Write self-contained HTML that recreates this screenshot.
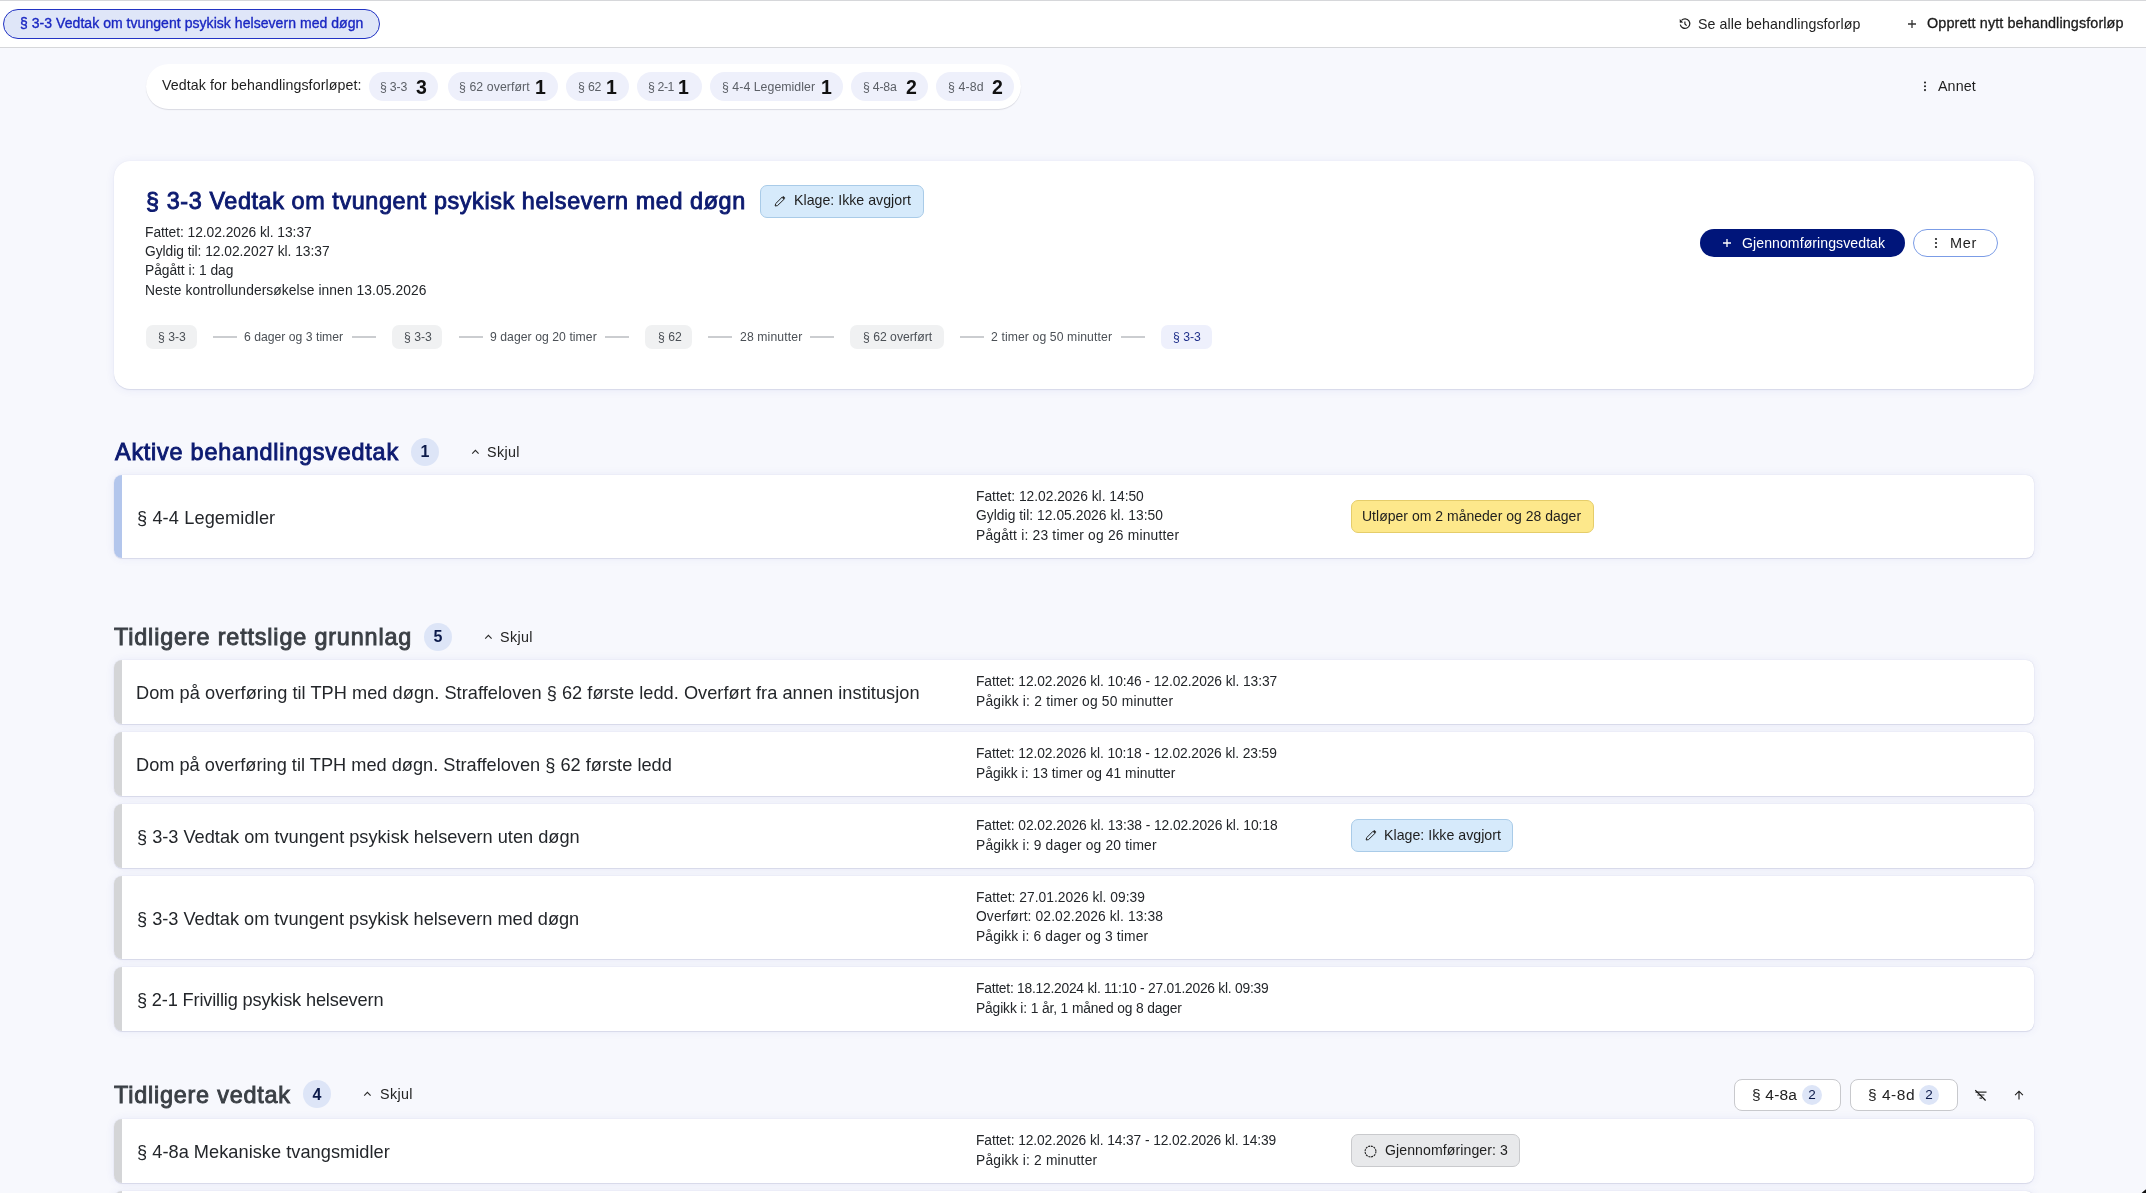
<!DOCTYPE html>
<html><head><meta charset="utf-8"><title>Behandlingsforløp</title>
<style>
html,body{margin:0;padding:0;}
body{width:2146px;height:1193px;overflow:hidden;background:#f7f8fd;font-family:"Liberation Sans", sans-serif;position:relative;}
.t{position:absolute;white-space:nowrap;will-change:transform;}
.b{position:absolute;}
</style></head><body>
<div class="b" style="left:0px;top:0px;width:2146px;height:48px;background:#fff;border-top:1px solid #d6d7da;border-bottom:1px solid #d6d7da;box-sizing:border-box"></div>
<div class="b" style="left:3px;top:9px;width:377px;height:30px;background:#dfe6f8;border:1px solid #2233c4;border-radius:15px;box-sizing:border-box"></div>
<div class="t" style="left:19.88px;top:14.35px;font-size:14px;line-height:18px;color:#1a27c2;font-weight:400;letter-spacing:0.049px;-webkit-text-stroke:0.35px #1a27c2">§ 3-3 Vedtak om tvungent psykisk helsevern med døgn</div>
<svg class="b" style="left:1672px;top:12px" width="28" height="24" viewBox="0 0 28 24"><path d="M8.3 12.6 A4.8 4.8 0 1 0 9.5 8.3" fill="none" stroke="#1e1e1e" stroke-width="1.2"/><path d="M7.7 7.0 L7.8 10.7 L11.2 10.5 Z" fill="#1e1e1e"/><path d="M12.9 9.4 V11.9 L14.6 13.6" fill="none" stroke="#1e1e1e" stroke-width="1.15"/></svg>
<div class="t" style="left:1697.90px;top:15.08px;font-size:14.2px;line-height:18px;color:#222;font-weight:400;letter-spacing:0.092px">Se alle behandlingsforløp</div>
<svg class="b" style="left:1907px;top:19px" width="10" height="10" viewBox="0 0 10 10"><path d="M5 1 V9 M1 5 H9" stroke="#333" stroke-width="1.3"/></svg>
<div class="t" style="left:1927.45px;top:13.51px;font-size:14.4px;line-height:19px;color:#1b1b1b;font-weight:400;letter-spacing:0.100px;-webkit-text-stroke:0.3px #1b1b1b">Opprett nytt behandlingsforløp</div>
<div class="b" style="left:146px;top:64px;width:875px;height:45px;background:#fff;border-radius:23px;box-shadow:0 1px 1px rgba(0,0,30,0.12)"></div>
<div class="t" style="left:161.60px;top:76.08px;font-size:14.2px;line-height:18px;color:#1e1e1e;font-weight:400;letter-spacing:0.103px">Vedtak for behandlingsforløpet:</div>
<div class="b" style="left:369px;top:72px;width:69px;height:29px;background:#eef0fb;border-radius:15px"></div>
<div class="t" style="left:380.30px;top:78.74px;font-size:12.3px;line-height:16px;color:#5b5f66;font-weight:400;letter-spacing:-0.200px">§ 3-3</div>
<div class="t" style="left:416.40px;top:74.74px;font-size:19.5px;line-height:25px;color:#111;font-weight:700;">3</div>
<div class="b" style="left:448px;top:72px;width:110px;height:29px;background:#eef0fb;border-radius:15px"></div>
<div class="t" style="left:458.70px;top:78.74px;font-size:12.3px;line-height:16px;color:#5b5f66;font-weight:400;letter-spacing:0.083px">§ 62 overført</div>
<div class="t" style="left:535.10px;top:74.74px;font-size:19.5px;line-height:25px;color:#111;font-weight:700;">1</div>
<div class="b" style="left:566px;top:72px;width:63px;height:29px;background:#eef0fb;border-radius:15px"></div>
<div class="t" style="left:577.50px;top:78.74px;font-size:12.3px;line-height:16px;color:#5b5f66;font-weight:400;letter-spacing:-0.167px">§ 62</div>
<div class="t" style="left:605.80px;top:74.74px;font-size:19.5px;line-height:25px;color:#111;font-weight:700;">1</div>
<div class="b" style="left:637px;top:72px;width:65px;height:29px;background:#eef0fb;border-radius:15px"></div>
<div class="t" style="left:648.10px;top:78.74px;font-size:12.3px;line-height:16px;color:#5b5f66;font-weight:400;letter-spacing:-0.400px">§ 2-1</div>
<div class="t" style="left:678.40px;top:74.74px;font-size:19.5px;line-height:25px;color:#111;font-weight:700;">1</div>
<div class="b" style="left:710px;top:72px;width:133px;height:29px;background:#eef0fb;border-radius:15px"></div>
<div class="t" style="left:721.60px;top:78.74px;font-size:12.3px;line-height:16px;color:#5b5f66;font-weight:400;letter-spacing:0.047px">§ 4-4 Legemidler</div>
<div class="t" style="left:820.50px;top:74.74px;font-size:19.5px;line-height:25px;color:#111;font-weight:700;">1</div>
<div class="b" style="left:851px;top:72px;width:77px;height:29px;background:#eef0fb;border-radius:15px"></div>
<div class="t" style="left:862.60px;top:78.74px;font-size:12.3px;line-height:16px;color:#5b5f66;font-weight:400;letter-spacing:-0.220px">§ 4-8a</div>
<div class="t" style="left:906.00px;top:74.74px;font-size:19.5px;line-height:25px;color:#111;font-weight:700;">2</div>
<div class="b" style="left:936px;top:72px;width:78px;height:29px;background:#eef0fb;border-radius:15px"></div>
<div class="t" style="left:948.10px;top:78.74px;font-size:12.3px;line-height:16px;color:#5b5f66;font-weight:400;letter-spacing:0.120px">§ 4-8d</div>
<div class="t" style="left:991.70px;top:74.74px;font-size:19.5px;line-height:25px;color:#111;font-weight:700;">2</div>
<svg class="b" style="left:1923px;top:80px" width="4" height="13" viewBox="0 0 4 13"><circle cx="2" cy="2.5" r="1.05" fill="#222"/><circle cx="2" cy="6.3" r="1.05" fill="#222"/><circle cx="2" cy="10.1" r="1.05" fill="#222"/></svg>
<div class="t" style="left:1938.40px;top:77.05px;font-size:14.3px;line-height:19px;color:#1e1e1e;font-weight:400;letter-spacing:0.075px">Annet</div>
<div class="b" style="left:114px;top:161px;width:1920px;height:228px;background:#fff;border-radius:16px;box-shadow:0 1px 1px rgba(30,40,110,0.10),0 0 1px rgba(40,60,140,0.08),0 1px 10px rgba(50,70,180,0.08)"></div>
<div class="t" style="left:145.65px;top:185.89px;font-size:23.4px;line-height:30px;color:#0c1a70;font-weight:400;letter-spacing:0.594px;-webkit-text-stroke:0.9px #0c1a70">§ 3-3 Vedtak om tvungent psykisk helsevern med døgn</div>
<div class="b" style="left:760px;top:185px;width:164px;height:33px;background:#d6eafb;border:1px solid #a9cbe8;border-radius:7px;box-sizing:border-box"></div>
<svg class="b" style="left:774px;top:195px" width="12" height="12" viewBox="0 0 12 12"><path d="M1.2 11 L1.6 8.7 L8 2.3 L10 4.3 L3.5 10.6 Z" fill="none" stroke="#222" stroke-width="1" stroke-linejoin="round"/><path d="M8 2.3 L9.3 1 L11.3 3 L10 4.3 Z" fill="#222"/></svg>
<div class="t" style="left:794.10px;top:191.08px;font-size:14.2px;line-height:18px;color:#1e1e1e;font-weight:400;letter-spacing:0.006px">Klage: Ikke avgjort</div>
<div class="t" style="left:145.00px;top:223.82px;font-size:13.8px;line-height:18px;color:#23262a;font-weight:400;letter-spacing:-0.048px">Fattet: 12.02.2026 kl. 13:37</div>
<div class="t" style="left:145.40px;top:243.12px;font-size:13.8px;line-height:18px;color:#23262a;font-weight:400;letter-spacing:-0.032px">Gyldig til: 12.02.2027 kl. 13:37</div>
<div class="t" style="left:145.00px;top:262.42px;font-size:13.8px;line-height:18px;color:#23262a;font-weight:400;letter-spacing:-0.043px">Pågått i: 1 dag</div>
<div class="t" style="left:145.00px;top:281.72px;font-size:13.8px;line-height:18px;color:#23262a;font-weight:400;letter-spacing:0.090px">Neste kontrollundersøkelse innen 13.05.2026</div>
<div class="b" style="left:146px;top:325px;width:51px;height:24px;background:#f0f1f2;border-radius:7px"></div>
<div class="t" style="left:158.30px;top:329.27px;font-size:12.2px;line-height:16px;color:#4b5056;font-weight:400;">§ 3-3</div>
<div class="b" style="left:213px;top:336px;width:24px;height:2px;background:#cbcdd0"></div>
<div class="t" style="left:244.20px;top:329.27px;font-size:12.2px;line-height:16px;color:#4b5056;font-weight:400;letter-spacing:0.012px">6 dager og 3 timer</div>
<div class="b" style="left:352px;top:336px;width:24px;height:2px;background:#cbcdd0"></div>
<div class="b" style="left:392px;top:325px;width:50px;height:24px;background:#f0f1f2;border-radius:7px"></div>
<div class="t" style="left:404.30px;top:329.27px;font-size:12.2px;line-height:16px;color:#4b5056;font-weight:400;">§ 3-3</div>
<div class="b" style="left:459px;top:336px;width:24px;height:2px;background:#cbcdd0"></div>
<div class="t" style="left:490.10px;top:329.27px;font-size:12.2px;line-height:16px;color:#4b5056;font-weight:400;letter-spacing:0.056px">9 dager og 20 timer</div>
<div class="b" style="left:605px;top:336px;width:24px;height:2px;background:#cbcdd0"></div>
<div class="b" style="left:645px;top:325px;width:47px;height:24px;background:#f0f1f2;border-radius:7px"></div>
<div class="t" style="left:657.70px;top:329.27px;font-size:12.2px;line-height:16px;color:#4b5056;font-weight:400;">§ 62</div>
<div class="b" style="left:708px;top:336px;width:24px;height:2px;background:#cbcdd0"></div>
<div class="t" style="left:739.80px;top:329.27px;font-size:12.2px;line-height:16px;color:#4b5056;font-weight:400;letter-spacing:0.130px">28 minutter</div>
<div class="b" style="left:810px;top:336px;width:24px;height:2px;background:#cbcdd0"></div>
<div class="b" style="left:850px;top:325px;width:94px;height:24px;background:#f0f1f2;border-radius:7px"></div>
<div class="t" style="left:862.60px;top:329.27px;font-size:12.2px;line-height:16px;color:#4b5056;font-weight:400;">§ 62 overført</div>
<div class="b" style="left:960px;top:336px;width:24px;height:2px;background:#cbcdd0"></div>
<div class="t" style="left:991.40px;top:329.27px;font-size:12.2px;line-height:16px;color:#4b5056;font-weight:400;letter-spacing:0.114px">2 timer og 50 minutter</div>
<div class="b" style="left:1121px;top:336px;width:24px;height:2px;background:#cbcdd0"></div>
<div class="b" style="left:1161px;top:325px;width:51px;height:24px;background:#eef0fc;border-radius:7px"></div>
<div class="t" style="left:1173.30px;top:329.27px;font-size:12.2px;line-height:16px;color:#1f2f8a;font-weight:400;">§ 3-3</div>
<div class="b" style="left:1700px;top:229px;width:205px;height:28px;background:#00157a;border-radius:14px"></div>
<svg class="b" style="left:1722px;top:238px" width="10" height="10" viewBox="0 0 10 10"><path d="M5 1 V9 M1 5 H9" stroke="#fff" stroke-width="1.3"/></svg>
<div class="t" style="left:1741.50px;top:233.61px;font-size:14.1px;line-height:18px;color:#fff;font-weight:400;letter-spacing:0.068px">Gjennomføringsvedtak</div>
<div class="b" style="left:1913px;top:229px;width:85px;height:28px;background:#fff;border:1px solid #7b9ce6;border-radius:14px;box-sizing:border-box"></div>
<svg class="b" style="left:1934px;top:237px" width="4" height="12" viewBox="0 0 4 12"><circle cx="2" cy="2" r="1.1" fill="#222"/><circle cx="2" cy="6" r="1.1" fill="#222"/><circle cx="2" cy="10" r="1.1" fill="#222"/></svg>
<div class="t" style="left:1949.50px;top:233.98px;font-size:14.5px;line-height:19px;color:#1e1e1e;font-weight:400;letter-spacing:0.700px">Mer</div>
<div class="t" style="left:114.55px;top:437.39px;font-size:23.4px;line-height:30px;color:#0c1a70;font-weight:400;letter-spacing:0.774px;-webkit-text-stroke:0.9px #0c1a70">Aktive behandlingsvedtak</div>
<div class="b" style="left:411px;top:437.5px;width:28px;height:28px;background:#dde5f7;border-radius:50%"></div>
<div class="t" style="left:415.00px;top:441.46px;font-size:16px;line-height:21px;color:#0c1a4a;font-weight:700;width:20px;text-align:center">1</div>
<svg class="b" style="left:470.5px;top:448.5px" width="9" height="6" viewBox="0 0 9 6"><path d="M1.2 4.6 L4.4 1.3 L7.6 4.6" fill="none" stroke="#2a2a2a" stroke-width="1.1"/></svg>
<div class="t" style="left:486.70px;top:442.55px;font-size:14.3px;line-height:19px;color:#222;font-weight:400;letter-spacing:0.375px">Skjul</div>
<div class="b" style="left:114px;top:475px;width:1920px;height:83px;background:#fff;border-radius:8px;box-shadow:0 1px 1px rgba(30,40,110,0.10),0 0 1px rgba(30,40,110,0.18),0 0 10px rgba(60,80,190,0.08)"></div>
<div class="b" style="left:114px;top:475px;width:8px;height:83px;background:#b3c6ec;border-radius:8px 0 0 8px"></div>
<div class="t" style="left:136.80px;top:505.89px;font-size:18.2px;line-height:24px;color:#23262a;font-weight:400;letter-spacing:0.113px">§ 4-4 Legemidler</div>
<div class="t" style="left:975.90px;top:487.82px;font-size:13.8px;line-height:18px;color:#23262a;font-weight:400;letter-spacing:-0.007px">Fattet: 12.02.2026 kl. 14:50</div>
<div class="t" style="left:976.30px;top:507.32px;font-size:13.8px;line-height:18px;color:#23262a;font-weight:400;letter-spacing:0.042px">Gyldig til: 12.05.2026 kl. 13:50</div>
<div class="t" style="left:975.90px;top:526.82px;font-size:13.8px;line-height:18px;color:#23262a;font-weight:400;letter-spacing:0.209px">Pågått i: 23 timer og 26 minutter</div>
<div class="b" style="left:1351px;top:500px;width:243px;height:33px;background:#fde88b;border:1px solid #e5cd6a;border-radius:7px;box-sizing:border-box"></div>
<div class="t" style="left:1362.20px;top:507.15px;font-size:14px;line-height:18px;color:#1e1e1e;font-weight:400;letter-spacing:0.013px">Utløper om 2 måneder og 28 dager</div>
<div class="t" style="left:114.15px;top:622.39px;font-size:23.4px;line-height:30px;color:#3a3f45;font-weight:400;letter-spacing:0.833px;-webkit-text-stroke:0.9px #3a3f45">Tidligere rettslige grunnlag</div>
<div class="b" style="left:424px;top:622.5px;width:28px;height:28px;background:#dde5f7;border-radius:50%"></div>
<div class="t" style="left:428.00px;top:626.46px;font-size:16px;line-height:21px;color:#0c1a4a;font-weight:700;width:20px;text-align:center">5</div>
<svg class="b" style="left:483.8px;top:633.5px" width="9" height="6" viewBox="0 0 9 6"><path d="M1.2 4.6 L4.4 1.3 L7.6 4.6" fill="none" stroke="#2a2a2a" stroke-width="1.1"/></svg>
<div class="t" style="left:500.00px;top:627.55px;font-size:14.3px;line-height:19px;color:#222;font-weight:400;letter-spacing:0.375px">Skjul</div>
<div class="b" style="left:114px;top:660px;width:1920px;height:64px;background:#fff;border-radius:8px;box-shadow:0 1px 1px rgba(30,40,110,0.10),0 0 1px rgba(30,40,110,0.18),0 0 10px rgba(60,80,190,0.08)"></div>
<div class="b" style="left:114px;top:660px;width:8px;height:64px;background:#d4d5d7;border-radius:8px 0 0 8px"></div>
<div class="t" style="left:136.30px;top:681.39px;font-size:18.2px;line-height:24px;color:#23262a;font-weight:400;letter-spacing:0.040px">Dom på overføring til TPH med døgn. Straffeloven § 62 første ledd. Overført fra annen institusjon</div>
<div class="t" style="left:975.90px;top:673.07px;font-size:13.8px;line-height:18px;color:#23262a;font-weight:400;letter-spacing:-0.082px">Fattet: 12.02.2026 kl. 10:46 - 12.02.2026 kl. 13:37</div>
<div class="t" style="left:975.90px;top:692.57px;font-size:13.8px;line-height:18px;color:#23262a;font-weight:400;letter-spacing:0.223px">Pågikk i: 2 timer og 50 minutter</div>
<div class="b" style="left:114px;top:732px;width:1920px;height:64px;background:#fff;border-radius:8px;box-shadow:0 1px 1px rgba(30,40,110,0.10),0 0 1px rgba(30,40,110,0.18),0 0 10px rgba(60,80,190,0.08)"></div>
<div class="b" style="left:114px;top:732px;width:8px;height:64px;background:#d4d5d7;border-radius:8px 0 0 8px"></div>
<div class="t" style="left:136.30px;top:753.39px;font-size:18.2px;line-height:24px;color:#23262a;font-weight:400;letter-spacing:0.011px">Dom på overføring til TPH med døgn. Straffeloven § 62 første ledd</div>
<div class="t" style="left:975.90px;top:745.07px;font-size:13.8px;line-height:18px;color:#23262a;font-weight:400;letter-spacing:-0.088px">Fattet: 12.02.2026 kl. 10:18 - 12.02.2026 kl. 23:59</div>
<div class="t" style="left:975.90px;top:764.57px;font-size:13.8px;line-height:18px;color:#23262a;font-weight:400;letter-spacing:0.044px">Pågikk i: 13 timer og 41 minutter</div>
<div class="b" style="left:114px;top:804px;width:1920px;height:64px;background:#fff;border-radius:8px;box-shadow:0 1px 1px rgba(30,40,110,0.10),0 0 1px rgba(30,40,110,0.18),0 0 10px rgba(60,80,190,0.08)"></div>
<div class="b" style="left:114px;top:804px;width:8px;height:64px;background:#d4d5d7;border-radius:8px 0 0 8px"></div>
<div class="t" style="left:136.80px;top:825.39px;font-size:18.2px;line-height:24px;color:#23262a;font-weight:400;letter-spacing:-0.004px">§ 3-3 Vedtak om tvungent psykisk helsevern uten døgn</div>
<div class="t" style="left:975.90px;top:817.07px;font-size:13.8px;line-height:18px;color:#23262a;font-weight:400;letter-spacing:-0.074px">Fattet: 02.02.2026 kl. 13:38 - 12.02.2026 kl. 10:18</div>
<div class="t" style="left:975.90px;top:836.57px;font-size:13.8px;line-height:18px;color:#23262a;font-weight:400;letter-spacing:0.175px">Pågikk i: 9 dager og 20 timer</div>
<div class="b" style="left:1351px;top:819px;width:162px;height:33px;background:#d6eafb;border:1px solid #a9cbe8;border-radius:7px;box-sizing:border-box"></div>
<svg class="b" style="left:1365px;top:829px" width="12" height="12" viewBox="0 0 12 12"><path d="M1.2 11 L1.6 8.7 L8 2.3 L10 4.3 L3.5 10.6 Z" fill="none" stroke="#222" stroke-width="1" stroke-linejoin="round"/><path d="M8 2.3 L9.3 1 L11.3 3 L10 4.3 Z" fill="#222"/></svg>
<div class="t" style="left:1384.30px;top:825.58px;font-size:14.2px;line-height:18px;color:#1e1e1e;font-weight:400;letter-spacing:0.011px">Klage: Ikke avgjort</div>
<div class="b" style="left:114px;top:876px;width:1920px;height:83px;background:#fff;border-radius:8px;box-shadow:0 1px 1px rgba(30,40,110,0.10),0 0 1px rgba(30,40,110,0.18),0 0 10px rgba(60,80,190,0.08)"></div>
<div class="b" style="left:114px;top:876px;width:8px;height:83px;background:#d4d5d7;border-radius:8px 0 0 8px"></div>
<div class="t" style="left:136.80px;top:906.89px;font-size:18.2px;line-height:24px;color:#23262a;font-weight:400;letter-spacing:-0.012px">§ 3-3 Vedtak om tvungent psykisk helsevern med døgn</div>
<div class="t" style="left:975.90px;top:888.82px;font-size:13.8px;line-height:18px;color:#23262a;font-weight:400;letter-spacing:0.037px">Fattet: 27.01.2026 kl. 09:39</div>
<div class="t" style="left:976.40px;top:908.32px;font-size:13.8px;line-height:18px;color:#23262a;font-weight:400;letter-spacing:0.128px">Overført: 02.02.2026 kl. 13:38</div>
<div class="t" style="left:975.90px;top:927.82px;font-size:13.8px;line-height:18px;color:#23262a;font-weight:400;letter-spacing:0.152px">Pågikk i: 6 dager og 3 timer</div>
<div class="b" style="left:114px;top:967px;width:1920px;height:64px;background:#fff;border-radius:8px;box-shadow:0 1px 1px rgba(30,40,110,0.10),0 0 1px rgba(30,40,110,0.18),0 0 10px rgba(60,80,190,0.08)"></div>
<div class="b" style="left:114px;top:967px;width:8px;height:64px;background:#d4d5d7;border-radius:8px 0 0 8px"></div>
<div class="t" style="left:136.80px;top:988.39px;font-size:18.2px;line-height:24px;color:#23262a;font-weight:400;letter-spacing:-0.162px">§ 2-1 Frivillig psykisk helsevern</div>
<div class="t" style="left:975.90px;top:980.07px;font-size:13.8px;line-height:18px;color:#23262a;font-weight:400;letter-spacing:-0.232px">Fattet: 18.12.2024 kl. 11:10 - 27.01.2026 kl. 09:39</div>
<div class="t" style="left:975.90px;top:999.57px;font-size:13.8px;line-height:18px;color:#23262a;font-weight:400;letter-spacing:-0.127px">Pågikk i: 1 år, 1 måned og 8 dager</div>
<div class="t" style="left:114.15px;top:1079.89px;font-size:23.4px;line-height:30px;color:#3a3f45;font-weight:400;letter-spacing:0.787px;-webkit-text-stroke:0.9px #3a3f45">Tidligere vedtak</div>
<div class="b" style="left:303px;top:1080px;width:28px;height:28px;background:#dde5f7;border-radius:50%"></div>
<div class="t" style="left:307.00px;top:1083.96px;font-size:16px;line-height:21px;color:#0c1a4a;font-weight:700;width:20px;text-align:center">4</div>
<svg class="b" style="left:362.7px;top:1091px" width="9" height="6" viewBox="0 0 9 6"><path d="M1.2 4.6 L4.4 1.3 L7.6 4.6" fill="none" stroke="#2a2a2a" stroke-width="1.1"/></svg>
<div class="t" style="left:380.00px;top:1085.05px;font-size:14.3px;line-height:19px;color:#222;font-weight:400;letter-spacing:0.375px">Skjul</div>
<div class="b" style="left:1734px;top:1079px;width:107px;height:32px;background:#fff;border:1px solid #c8c9cd;border-radius:8px;box-sizing:border-box"></div>
<div class="t" style="left:1752.40px;top:1084.63px;font-size:15.5px;line-height:20px;color:#222;font-weight:400;letter-spacing:0.200px">§ 4-8a</div>
<div class="b" style="left:1802px;top:1085px;width:20px;height:20px;background:#dde5f7;border-radius:50%"></div>
<div class="t" style="left:1802.00px;top:1086.32px;font-size:13.5px;line-height:18px;color:#0c1a4a;font-weight:400;width:20px;text-align:center">2</div>
<div class="b" style="left:1850px;top:1079px;width:108px;height:32px;background:#fff;border:1px solid #c8c9cd;border-radius:8px;box-sizing:border-box"></div>
<div class="t" style="left:1868.10px;top:1084.63px;font-size:15.5px;line-height:20px;color:#222;font-weight:400;letter-spacing:0.520px">§ 4-8d</div>
<div class="b" style="left:1919px;top:1085px;width:20px;height:20px;background:#dde5f7;border-radius:50%"></div>
<div class="t" style="left:1919.00px;top:1086.32px;font-size:13.5px;line-height:18px;color:#0c1a4a;font-weight:400;width:20px;text-align:center">2</div>
<svg class="b" style="left:1974px;top:1089px" width="14" height="14" viewBox="0 0 14 14"><path d="M1.5 3.1 H12.5 M3.2 6 H10.4 M5.5 9.1 H8" stroke="#333" stroke-width="1.1"/><path d="M1.3 1.2 L11.6 11.5" stroke="#111" stroke-width="1.15"/></svg>
<svg class="b" style="left:2013px;top:1090px" width="12" height="12" viewBox="0 0 12 12"><path d="M6 9.6 V1.6 M2.1 5.1 L6 1.2 L9.9 5.1" fill="none" stroke="#1e1e1e" stroke-width="1.15"/></svg>
<div class="b" style="left:114px;top:1119px;width:1920px;height:64px;background:#fff;border-radius:8px;box-shadow:0 1px 1px rgba(30,40,110,0.10),0 0 1px rgba(30,40,110,0.18),0 0 10px rgba(60,80,190,0.08)"></div>
<div class="b" style="left:114px;top:1119px;width:8px;height:64px;background:#d4d5d7;border-radius:8px 0 0 8px"></div>
<div class="t" style="left:136.80px;top:1140.39px;font-size:18.2px;line-height:24px;color:#23262a;font-weight:400;letter-spacing:0.036px">§ 4-8a Mekaniske tvangsmidler</div>
<div class="t" style="left:975.90px;top:1132.07px;font-size:13.8px;line-height:18px;color:#23262a;font-weight:400;letter-spacing:-0.100px">Fattet: 12.02.2026 kl. 14:37 - 12.02.2026 kl. 14:39</div>
<div class="t" style="left:975.90px;top:1151.57px;font-size:13.8px;line-height:18px;color:#23262a;font-weight:400;letter-spacing:0.200px">Pågikk i: 2 minutter</div>
<div class="b" style="left:1351px;top:1134px;width:169px;height:33px;background:#e8e9eb;border:1px solid #c9cacd;border-radius:7px;box-sizing:border-box"></div>
<svg class="b" style="left:1363.5px;top:1144.8px" width="13" height="13" viewBox="0 0 13 13"><circle cx="6.5" cy="6.5" r="5.4" fill="none" stroke="#222" stroke-width="1.1" stroke-dasharray="2 0.8"/></svg>
<div class="t" style="left:1385.00px;top:1141.11px;font-size:14.1px;line-height:18px;color:#1e1e1e;font-weight:400;letter-spacing:0.088px">Gjennomføringer: 3</div>
<div class="b" style="left:114px;top:1191px;width:1920px;height:64px;background:#fff;border-radius:8px;box-shadow:0 1px 1px rgba(30,40,110,0.10),0 0 1px rgba(30,40,110,0.18),0 0 10px rgba(60,80,190,0.08)"></div>
<div class="b" style="left:114px;top:1191px;width:8px;height:64px;background:#d4d5d7;border-radius:8px 0 0 8px"></div>
<svg class="b" style="left:2136px;top:1183px" width="10" height="10" viewBox="0 0 10 10"><path d="M10 6.3 Q7.8 8 5.6 10 L10 10 Z" fill="#111"/></svg>
</body></html>
